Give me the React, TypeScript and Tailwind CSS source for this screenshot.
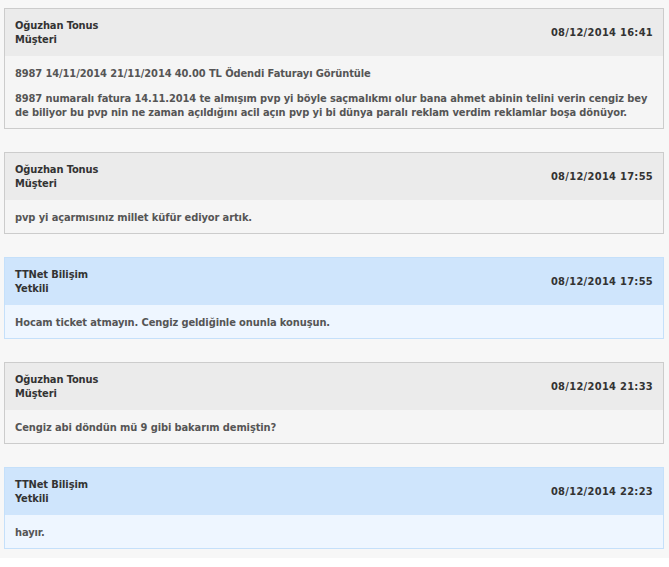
type Reply = {
  author: string;
  role: string;
  date: string;
  staff?: boolean;
  lines: string[];
};

const replies: Reply[] = [
  {
    author: "Oğuzhan Tonus",
    role: "Müşteri",
    date: "08/12/2014 16:41",
    lines: [
      "8987 14/11/2014 21/11/2014 40.00 TL Ödendi Faturayı Görüntüle",
      "8987 numaralı fatura 14.11.2014 te almışım pvp yi böyle saçmalıkmı olur bana ahmet abinin telini verin cengiz bey de biliyor bu pvp nin ne zaman açıldığını acil açın pvp yi bi dünya paralı reklam verdim reklamlar boşa dönüyor.",
    ],
  },
  {
    author: "Oğuzhan Tonus",
    role: "Müşteri",
    date: "08/12/2014 17:55",
    lines: ["pvp yi açarmısınız millet küfür ediyor artık."],
  },
  {
    author: "TTNet Bilişim",
    role: "Yetkili",
    date: "08/12/2014 17:55",
    staff: true,
    lines: ["Hocam ticket atmayın. Cengiz geldiğinle onunla konuşun."],
  },
  {
    author: "Oğuzhan Tonus",
    role: "Müşteri",
    date: "08/12/2014 21:33",
    lines: ["Cengiz abi döndün mü 9 gibi bakarım demiştin?"],
  },
  {
    author: "TTNet Bilişim",
    role: "Yetkili",
    date: "08/12/2014 22:23",
    staff: true,
    lines: ["hayır."],
  },
];

function ReplyCard({ r }: { r: Reply }) {
  return (
    <div className={`w-[660px] border ${r.staff ? "border-[#c5e0fa]" : "border-[#cccccc]"}`}>
      <div
        className={`flex items-center justify-between px-[10px] pt-[10px] pb-[9px] text-[#333333] ${
          r.staff ? "bg-[#cfe5fc]" : "bg-[#ebebeb]"
        }`}
      >
        <div>
          <div>{r.author}</div>
          <div>{r.role}</div>
        </div>
        <div className="tracking-[0.3px]">{r.date}</div>
      </div>
      <div
        className={`flex flex-col gap-[11px] px-[10px] pt-[11px] pb-[8px] text-[#555555] ${
          r.staff ? "bg-[#eef6ff]" : "bg-[#f5f5f5]"
        }`}
      >
        {r.lines.map((l, i) => (
          <p key={i}>{l}</p>
        ))}
      </div>
    </div>
  );
}

export default function App() {
  return (
    <div className="bg-white min-h-screen">
      <div
        className="flex flex-col gap-[23px] bg-[#f7f7f7] pl-[4px] pt-[8px] pb-[9px] text-[11px] leading-[14px] font-bold tracking-[-0.1px]"
        style={{ fontFamily: '"DejaVu Sans Condensed", "DejaVu Sans", Verdana, sans-serif' }}
      >
        {replies.map((r, i) => (
          <ReplyCard key={i} r={r} />
        ))}
      </div>
    </div>
  );
}
